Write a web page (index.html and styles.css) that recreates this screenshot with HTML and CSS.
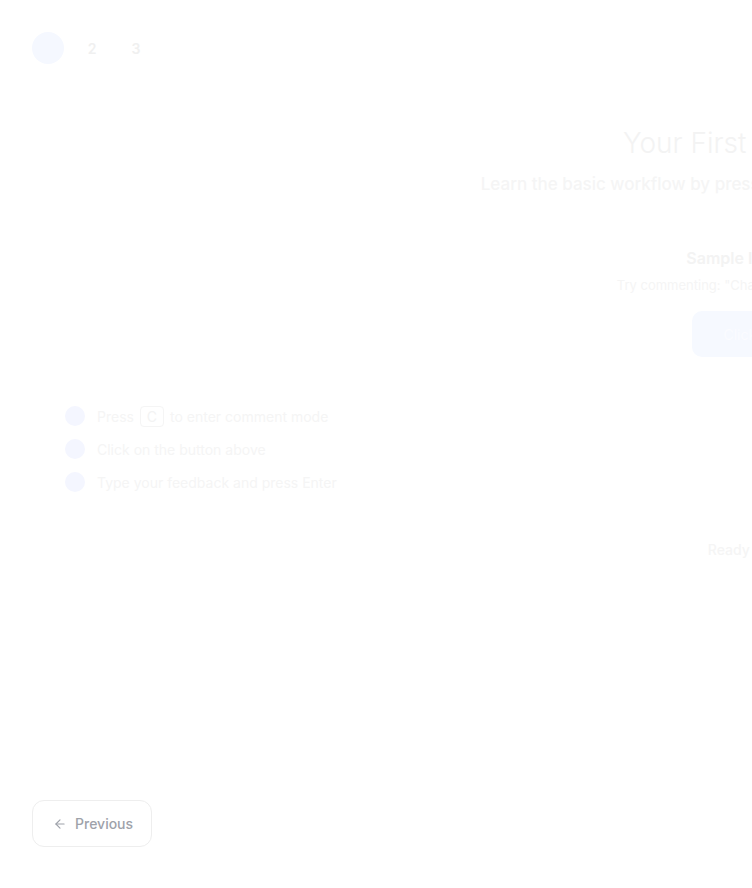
FILE: index.html
```html
<!DOCTYPE html>
<html lang="en">
<head>
<meta charset="utf-8">
<title>Your First Comment</title>
<link rel="stylesheet" href="styles.css">
</head>
<body>
<div class="page">
  <header class="stepper">
    <span class="step step-active"></span>
    <span class="step">2</span>
    <span class="step">3</span>
  </header>

  <main class="stage">
    <div class="intro">
      <h1 class="title">Your First Comment</h1>
      <p class="subtitle">Learn the basic workflow by pressing C and clicking on an element</p>
    </div>

    <div class="sample">
      <h2 class="sample-title">Sample Interface</h2>
      <p class="sample-hint">Try commenting: "Change this button color"</p>
      <button class="sample-btn">Click me</button>
    </div>

    <ol class="steps">
      <li class="steps-item"><span class="dot"></span><span>Press <kbd class="key">C</kbd> to enter comment mode</span></li>
      <li class="steps-item"><span class="dot"></span><span>Click on the button above</span></li>
      <li class="steps-item"><span class="dot"></span><span>Type your feedback and press Enter</span></li>
    </ol>

    <p class="ready">Ready to try?</p>
  </main>

  <footer class="footer">
    <button class="prev-btn">
      <svg class="prev-icon" width="14" height="14" viewBox="0 0 24 24" fill="none" stroke="currentColor" stroke-width="2" stroke-linecap="round" stroke-linejoin="round"><path d="M19 12H5"/><path d="M12 19l-7-7 7-7"/></svg>
      <span>Previous</span>
    </button>
  </footer>
</div>
</body>
</html>
```

FILE: styles.css
```css
html, body {
  margin: 0;
  padding: 0;
  background: #ffffff;
  overflow: hidden;
}

body {
  font-family: Inter, "Noto Sans", sans-serif;
  width: 752px;
  height: 888px;
}

.page {
  position: relative;
  width: 752px;
  height: 888px;
}

.stepper {
  display: flex;
  gap: 12px;
  padding: 32px 0 0 32px;
}

.step {
  width: 32px;
  height: 32px;
  border-radius: 50%;
  display: flex;
  align-items: center;
  justify-content: center;
  font-size: 14px;
  font-weight: 600;
  color: #f0f0f0;
}

.step-active {
  background: #f5f8ff;
}

.stage {
  width: 1504px;
  display: flex;
  flex-direction: column;
  align-items: center;
  text-align: center;
}

.intro {
  margin-top: 62px;
}

.title {
  margin: 0;
  font-size: 28px;
  line-height: 34px;
  font-weight: 300;
  color: #f3f3f3;
  white-space: nowrap;
}

.subtitle {
  margin: 12px 0 0;
  font-size: 17px;
  line-height: 24px;
  font-weight: 500;
  color: #f5f5f5;
  white-space: nowrap;
}

.sample {
  margin-top: 50px;
  display: flex;
  flex-direction: column;
  align-items: center;
}

.sample-title {
  margin: 0;
  font-size: 16px;
  line-height: 24px;
  font-weight: 600;
  color: #f3f3f3;
  white-space: nowrap;
}

.sample-hint {
  margin: 6px 0 0;
  font-size: 13px;
  line-height: 18px;
  color: #f5f5f5;
  white-space: nowrap;
}

.sample-btn {
  margin-top: 17px;
  width: 120px;
  height: 46px;
  border: none;
  border-radius: 10px;
  background: #f6f9ff;
  color: #fbfcff;
  font-family: inherit;
  font-size: 14px;
}

.steps {
  align-self: flex-start;
  list-style: none;
  margin: 49px 0 0 65px;
  padding: 0;
  display: flex;
  flex-direction: column;
  gap: 13px;
  text-align: left;
}

.steps-item {
  display: flex;
  align-items: center;
  gap: 12px;
  height: 20px;
  font-size: 14px;
  color: #f5f5f5;
}

.dot {
  width: 20px;
  height: 20px;
  border-radius: 50%;
  background: #f4f6ff;
  flex: none;
}

.key {
  display: inline-block;
  font-family: inherit;
  font-size: 14px;
  padding: 1px 6px;
  margin: 0 2px;
  border: 1px solid #f5f5f5;
  border-radius: 4px;
  color: #f3f3f3;
}

.ready {
  margin: 48px 0 0;
  font-size: 14px;
  line-height: 20px;
  font-weight: 500;
  color: #f5f5f5;
  white-space: nowrap;
}

.footer {
  position: absolute;
  left: 32px;
  top: 800px;
}

.prev-btn {
  display: flex;
  align-items: center;
  gap: 8px;
  width: 120px;
  height: 47px;
  padding: 0 0 0 20px;
  border: 1px solid #eeeeee;
  border-radius: 12px;
  background: #ffffff;
  color: #9ea2aa;
  font-family: inherit;
  font-size: 14px;
  font-weight: 500;
}

.prev-icon {
  flex: none;
}
```
